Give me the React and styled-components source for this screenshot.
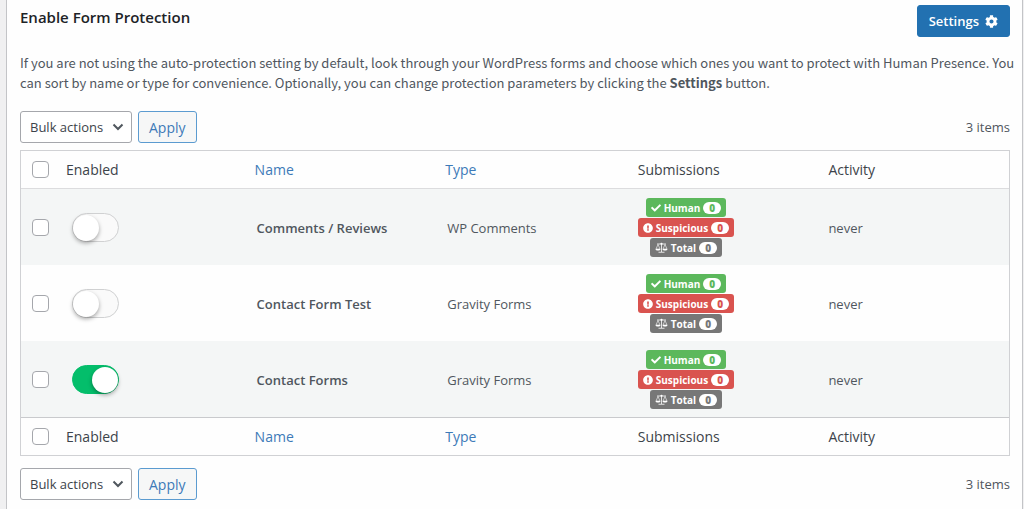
import React from 'react'
import styled, { createGlobalStyle } from 'styled-components'
import { FaCheck, FaCog, FaExclamationCircle } from 'react-icons/fa'

const forms = [
    { id: 'comments', name: 'Comments / Reviews', type: 'WP Comments', enabled: false },
    { id: 'test', name: 'Contact Form Test', type: 'Gravity Forms', enabled: false },
    { id: 'contact', name: 'Contact Forms', type: 'Gravity Forms', enabled: true },
]

function BulkBar({ place }) {
    return (
        <Bar>
            <SelectWrap>
                <Select aria-label={`Bulk actions ${place}`} defaultValue="bulk">
                    <option value="bulk">Bulk actions</option>
                    <option value="enable">Enable</option>
                    <option value="disable">Disable</option>
                </Select>
                <Chevron viewBox="0 0 12 8" aria-hidden="true">
                    <path d="M1.5 1.5 L6 6 L10.5 1.5" />
                </Chevron>
            </SelectWrap>
            <Button>Apply</Button>
            <Count>3 items</Count>
        </Bar>
    )
}

function HeadRow({ place }) {
    return (
        <tr>
            <CheckHead><Checkbox type="checkbox" aria-label={`Select all ${place}`} /></CheckHead>
            <Head>Enabled</Head>
            <Head $sortable><a href="#name">Name</a></Head>
            <Head $sortable><a href="#type">Type</a></Head>
            <Head>Submissions</Head>
            <Head>Activity</Head>
        </tr>
    )
}

function ScaleIcon() {
    return (
        <svg width="13" height="11" viewBox="0 0 26 22" fill="none" stroke="currentColor" strokeWidth="1.6" aria-hidden="true">
            <path d="M4 4 H22 M13 3 V20 M7 20.5 H19" />
            <path d="M6 5 L2 14 H10 Z M20 5 L16 14 H24 Z" strokeWidth="1.2" />
            <path d="M1 14 H11 C11 18 1 18 1 14 Z M15 14 H25 C25 18 15 18 15 14 Z" fill="currentColor" stroke="none" />
            <circle cx="13" cy="3.5" r="2.2" fill="currentColor" stroke="none" />
        </svg>
    )
}

function App() {
    return (
        <>
            <GlobalStyle />
            <Panel>
                <Header>
                    <h1>Enable Form Protection</h1>
                    <Button $primary>Settings <FaCog size={13} /></Button>
                </Header>
                <Intro>
                    If you are not using the auto-protection setting by default, look through your WordPress forms
                    and choose which ones you want to protect with Human Presence. You can sort by name or type for
                    convenience. Optionally, you can change protection parameters by clicking
                    the <strong>Settings</strong> button.
                </Intro>
                <BulkBar place="top" />
                <Table>
                    <thead><HeadRow place="top" /></thead>
                    <tbody>
                        {forms.map((form) => (
                            <Row key={form.id}>
                                <CheckCell><Checkbox type="checkbox" aria-label={`Select ${form.name}`} /></CheckCell>
                                <Cell>
                                    <Toggle type="checkbox" role="switch" aria-label={`Protect ${form.name}`} defaultChecked={form.enabled} />
                                </Cell>
                                <Cell><strong>{form.name}</strong></Cell>
                                <Cell>{form.type}</Cell>
                                <Cell>
                                    <Badges>
                                        <Badge $color="#5cb85c"><FaCheck size={10} />Human<b>0</b></Badge>
                                        <Badge $color="#d9534f"><FaExclamationCircle size={10} />Suspicious<b>0</b></Badge>
                                        <Badge $color="#777777"><ScaleIcon />Total<b>0</b></Badge>
                                    </Badges>
                                </Cell>
                                <Cell>never</Cell>
                            </Row>
                        ))}
                    </tbody>
                    <tfoot><HeadRow place="bottom" /></tfoot>
                </Table>
                <BulkBar place="bottom" />
            </Panel>
        </>
    )
}

export default App

const GlobalStyle = createGlobalStyle`
    *{
        box-sizing: border-box;
    }
    body{
        margin: 0;
        background: #f0f0f1;
        color: #50575e;
        font-family: "Open Sans", "Noto Sans", sans-serif;
        font-size: 13px;
        line-height: 20px;
    }
`

const Panel = styled.main`
    min-height: 100vh;
    margin: 0 1px 0 6px;
    padding: 5px 12px 8px 13px;
    background: #fefefe;
    border: 1px solid #c3c4c7;
    border-width: 0 1px;
`

const Header = styled.header`
    display: flex;
    justify-content: space-between;
    align-items: center;
    h1{
        margin: 0 0 8px;
        font-size: 15px;
        font-weight: 600;
        color: #1d2327;
    }
`

const Button = styled.button`
    height: 32px;
    padding: 0 ${({ $primary }) => ($primary ? 11 : 10)}px;
    display: flex;
    align-items: center;
    gap: 6px;
    border: 1px solid ${({ $primary }) => ($primary ? '#2271b1' : '#5b9bd0')};
    border-radius: 3px;
    background: ${({ $primary }) => ($primary ? '#2271b1' : '#f6f7f7')};
    color: ${({ $primary }) => ($primary ? '#ffffff' : '#3d7ab8')};
    font-family: inherit;
    font-size: ${({ $primary }) => ($primary ? 13 : 14)}px;
    font-weight: ${({ $primary }) => ($primary ? 600 : 400)};
    cursor: pointer;
`

const Intro = styled.p`
    margin: 16px -8px 0 0;
    padding-bottom: 18px;
    font-family: "Noto Sans CJK SC", sans-serif;
    font-size: 13px;
`

const Bar = styled.div`
    display: flex;
    align-items: center;
    gap: 6px;
`

const SelectWrap = styled.div`
    display: grid;
    align-items: center;
    > *{
        grid-area: 1 / 1;
    }
`

const Select = styled.select`
    height: 32px;
    width: 112px;
    padding: 0 0 0 9px;
    appearance: none;
    border: 1px solid #a5a7ac;
    border-radius: 3px;
    background: #ffffff;
    color: #3c434a;
    font-family: inherit;
    font-size: 13px;
`

const Chevron = styled.svg`
    width: 12px;
    height: 8px;
    margin-right: 8px;
    justify-self: end;
    pointer-events: none;
    fill: none;
    stroke: #50575e;
    stroke-width: 2;
`

const Count = styled.span`
    margin-left: auto;
`

const Table = styled.table`
    width: 100%;
    margin: 7px 0 12px;
    table-layout: fixed;
    border-collapse: separate;
    border-spacing: 0;
    border: 1px solid #d0d1d4;
    background: #fefefe;
    thead th{
        border-bottom: 1px solid #dcdcde;
    }
    tfoot th{
        border-top: 1px solid #c9cacd;
    }
`

const Head = styled.th`
    height: 38px;
    padding: 0 ${({ $sortable }) => ($sortable ? 8 : 10)}px;
    text-align: left;
    font-size: 14px;
    font-weight: 400;
    color: #3c434a;
    a{
        color: #3d7ab8;
        text-decoration: none;
    }
`

const CheckHead = styled(Head)`
    width: 35px;
    padding: 0 0 0 11px;
`

const Row = styled.tr`
    &:nth-child(odd){
        background: #f4f6f6;
    }
`

const Cell = styled.td`
    padding: 9px 10px 8px;
    strong{
        font-weight: 600;
    }
`

const CheckCell = styled(Cell)`
    padding: 0 0 0 11px;
`

const Checkbox = styled.input`
    display: block;
    width: 17px;
    height: 17px;
    margin: 0;
    appearance: none;
    border: 1px solid #a5a7ac;
    border-radius: 4px;
    background: #ffffff;
    &:checked{
        background: #2271b1;
    }
`

const Toggle = styled.input`
    display: flex;
    align-items: center;
    width: 47px;
    height: 29px;
    margin: 0 0 0 6px;
    appearance: none;
    border: 1px solid #d0d1d2;
    border-radius: 15px;
    background: #fafafa;
    cursor: pointer;
    &::before{
        content: "";
        width: 26px;
        height: 26px;
        border-radius: 50%;
        background: #ffffff;
        box-shadow: 0 2px 4px rgba(0, 0, 0, 0.35);
    }
    &:checked{
        justify-content: flex-end;
        border-color: #04be6b;
        background: #04be6b;
    }
`

const Badges = styled.div`
    display: flex;
    flex-direction: column;
    align-items: center;
    gap: 1px;
    width: fit-content;
`

const Badge = styled.span`
    display: flex;
    align-items: center;
    gap: 3px;
    height: 19px;
    padding: 0 5px;
    border-radius: 3px;
    background: ${({ $color }) => $color};
    color: #ffffff;
    font-size: 10px;
    font-weight: 700;
    line-height: 12px;
    b{
        min-width: 18px;
        border-radius: 6px;
        background: #ffffff;
        color: ${({ $color }) => $color};
        text-align: center;
    }
`
